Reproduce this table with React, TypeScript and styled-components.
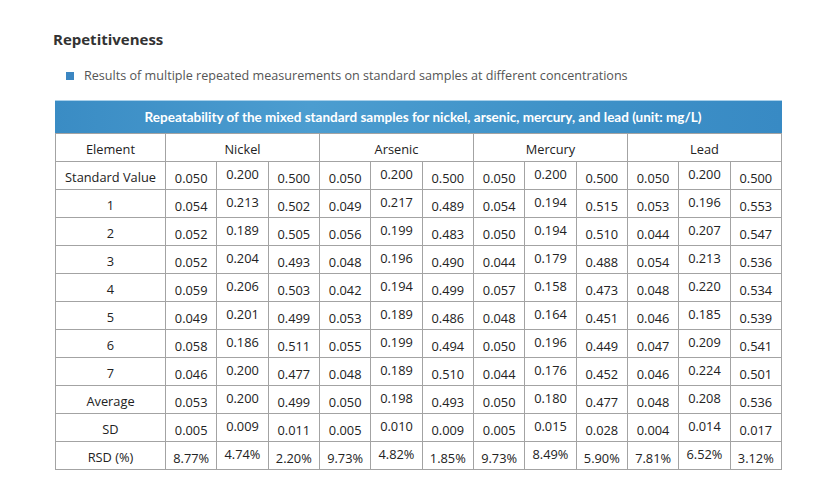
import React from 'react';
import styled, { createGlobalStyle } from 'styled-components';

const GlobalStyle = createGlobalStyle`
  html, body {
    margin: 0;
    padding: 0;
    background: #ffffff;
  }
  body {
    font-family: "Open Sans", "Noto Sans", sans-serif;
  }
`;

type Group = { name: string; values: string[][] };

const groups: Group[] = [
  {
    name: 'Nickel',
    values: [
      ['0.050', '0.200', '0.500'],
      ['0.054', '0.213', '0.502'],
      ['0.052', '0.189', '0.505'],
      ['0.052', '0.204', '0.493'],
      ['0.059', '0.206', '0.503'],
      ['0.049', '0.201', '0.499'],
      ['0.058', '0.186', '0.511'],
      ['0.046', '0.200', '0.477'],
      ['0.053', '0.200', '0.499'],
      ['0.005', '0.009', '0.011'],
      ['8.77%', '4.74%', '2.20%'],
    ],
  },
  {
    name: 'Arsenic',
    values: [
      ['0.050', '0.200', '0.500'],
      ['0.049', '0.217', '0.489'],
      ['0.056', '0.199', '0.483'],
      ['0.048', '0.196', '0.490'],
      ['0.042', '0.194', '0.499'],
      ['0.053', '0.189', '0.486'],
      ['0.055', '0.199', '0.494'],
      ['0.048', '0.189', '0.510'],
      ['0.050', '0.198', '0.493'],
      ['0.005', '0.010', '0.009'],
      ['9.73%', '4.82%', '1.85%'],
    ],
  },
  {
    name: 'Mercury',
    values: [
      ['0.050', '0.200', '0.500'],
      ['0.054', '0.194', '0.515'],
      ['0.050', '0.194', '0.510'],
      ['0.044', '0.179', '0.488'],
      ['0.057', '0.158', '0.473'],
      ['0.048', '0.164', '0.451'],
      ['0.050', '0.196', '0.449'],
      ['0.044', '0.176', '0.452'],
      ['0.050', '0.180', '0.477'],
      ['0.005', '0.015', '0.028'],
      ['9.73%', '8.49%', '5.90%'],
    ],
  },
  {
    name: 'Lead',
    values: [
      ['0.050', '0.200', '0.500'],
      ['0.053', '0.196', '0.553'],
      ['0.044', '0.207', '0.547'],
      ['0.054', '0.213', '0.536'],
      ['0.048', '0.220', '0.534'],
      ['0.046', '0.185', '0.539'],
      ['0.047', '0.209', '0.541'],
      ['0.046', '0.224', '0.501'],
      ['0.048', '0.208', '0.536'],
      ['0.004', '0.014', '0.017'],
      ['7.81%', '6.52%', '3.12%'],
    ],
  },
];

const rowLabels = ['Standard Value', '1', '2', '3', '4', '5', '6', '7', 'Average', 'SD', 'RSD (%)'];

const App: React.FC = () => {
  return (
    <>
      <GlobalStyle />
      <Page>
        <Heading>Repetitiveness</Heading>
        <BulletLine>
          <Bullet />
          Results of multiple repeated measurements on standard samples at different concentrations
        </BulletLine>
        <TableWrap>
          <TitleBar>
            Repeatability of the mixed standard samples for nickel, arsenic, mercury, and lead (unit: mg/L)
          </TitleBar>
          <Table>
            <colgroup>
              <col style={{ width: 110 }} />
              {Array.from({ length: 12 }).map((_, i) => (
                <col key={i} />
              ))}
            </colgroup>
            <tbody>
              <tr>
                <Cell>Element</Cell>
                {groups.map((g) => (
                  <Cell key={g.name} colSpan={3}>
                    {g.name}
                  </Cell>
                ))}
              </tr>
              {rowLabels.map((label, r) => (
                <tr key={label}>
                  <Cell>{label}</Cell>
                  {groups.map((g) =>
                    g.values[r].map((v, i) => (
                      <Cell key={g.name + i} $raised={i === 1} $value>
                        {v}
                      </Cell>
                    ))
                  )}
                </tr>
              ))}
            </tbody>
          </Table>
        </TableWrap>
      </Page>
    </>
  );
};

const Page = styled.div`
  width: 837px;
  height: 499px;
  box-sizing: border-box;
  padding: 28px 0 0 55px;
`;

const Heading = styled.h2`
  margin: 0 0 0 -2px;
  font-family: "Open Sans", sans-serif;
  font-size: 15px;
  font-weight: 700;
  color: #333333;
  line-height: 22px;
`;

const BulletLine = styled.div`
  display: flex;
  align-items: center;
  gap: 10px;
  margin: 16px 0 0 11px;
  font-size: 12.6px;
  color: #555555;
  line-height: 20px;
`;

const Bullet = styled.span`
  width: 8px;
  height: 8px;
  background: #3b86c2;
  flex: none;
`;

const TableWrap = styled.div`
  width: 727px;
  margin-top: 14px;
`;

const TitleBar = styled.div`
  height: 33px;
  box-sizing: border-box;
  padding: 0 0 0 9px;
  border-top: 1px solid #a9d0ea;
  background: linear-gradient(90deg, #3a8cc4 0%, #4c9dd0 35%, #3f92c8 70%, #388ac4 100%);
  color: #ffffff;
  font-family: Lato, sans-serif;
  font-weight: 700;
  font-size: 13.5px;
  letter-spacing: 0;
  display: flex;
  align-items: center;
  justify-content: center;
`;

const Table = styled.table`
  width: 727px;
  table-layout: fixed;
  border-collapse: collapse;
`;

const Cell = styled.td<{ $raised?: boolean; $value?: boolean }>`
  height: 28px;
  box-sizing: border-box;
  padding: ${(p) => (p.$raised ? '0 0 3px' : p.$value ? '5px 0 0' : '3px 0 0')};
  border: 1px solid #a3a3a3;
  text-align: center;
  vertical-align: middle;
  font-size: 12.8px;
  color: #222222;
  white-space: nowrap;
`;

export default App;
